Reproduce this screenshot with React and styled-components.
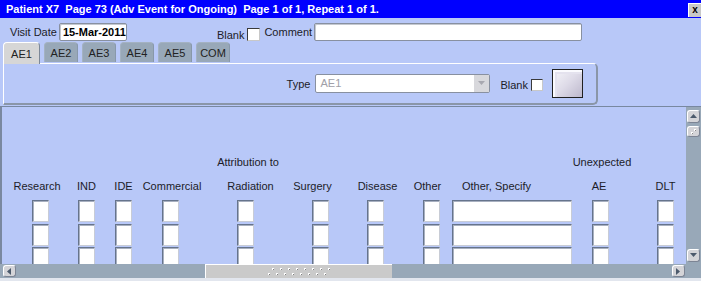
import React from 'react';
import styled, { createGlobalStyle } from 'styled-components';

// ---- styles ----
const GlobalStyle = createGlobalStyle`
  body {
    margin: 0;
    background: #b8c8f8;
    font-family: 'Liberation Sans', Arial, sans-serif;
  }
  * { box-sizing: border-box; }
`;

const Window = styled.div`
  width: 701px;
  height: 281px;
  display: flex;
  flex-direction: column;
  background: #b8c8f8;
  overflow: hidden;
  font-size: 11px;
  color: #1c1c28;
`;

const TitleBar = styled.div`
  height: 18px;
  flex: none;
  display: flex;
  align-items: flex-start;
  padding-left: 6px;
  background: #0000ff;
`;

const Title = styled.div`
  flex: 1;
  color: #fff;
  font-weight: bold;
  font-size: 11px;
  line-height: 18px;
  white-space: pre;
`;

const CloseButton = styled.div`
  margin-top: 3px;
  width: 13px;
  height: 14px;
  background: #c8c8c8;
  border-top: 1px solid #fff;
  border-left: 1px solid #fff;
  color: #000;
  font-weight: bold;
  font-size: 10px;
  line-height: 11px;
  text-align: center;
`;

const TopRow = styled.div`
  height: 24px;
  flex: none;
  display: flex;
  align-items: center;
  padding: 5px 0 1px 10px;
`;

const Label = styled.span`
  line-height: 14px;
  white-space: nowrap;
  margin-left: ${p => p.$ml || 0}px;
`;

const TextInput = styled.div`
  width: ${p => p.$w}px;
  height: 18px;
  margin-left: ${p => p.$ml || 0}px;
  padding-left: 3px;
  background: #fff;
  border: 1px solid #8890a0;
  border-radius: 2px;
  box-shadow: inset 1px 1px 0 #c4c8d0;
  color: #000;
  font-weight: bold;
  line-height: 16px;
  white-space: nowrap;
`;

const BlankGroup = styled.div`
  display: flex;
  align-items: center;
  margin-left: ${p => p.$ml || 0}px;
  margin-top: ${p => p.$mt || 0}px;
`;

const CheckBox = styled.div`
  width: ${p => p.$size || 13}px;
  height: ${p => p.$size || 13}px;
  margin-left: 3px;
  background: #fff;
  border-style: solid;
  border-width: 1px;
  border-color: #3a3a3a #c8c8c8 #c8c8c8 #3a3a3a;
`;

const TabStrip = styled.div`
  height: 21px;
  flex: none;
  display: flex;
  align-items: flex-end;
  gap: 4px;
  padding-left: 3px;
  position: relative;
  z-index: 1;
`;

const Tab = styled.div`
  width: ${p => (p.$active ? 37 : 34)}px;
  height: ${p => (p.$active ? 22 : 20)}px;
  margin-bottom: ${p => (p.$active ? -1 : 1)}px;
  display: flex;
  align-items: center;
  justify-content: center;
  background: ${p => (p.$active ? '#d6d6d6' : '#98a8b8')};
  border-radius: 4px 4px 0 0;
  border-top: 1px solid ${p => (p.$active ? '#fff' : '#a4b2c2')};
  border-left: 1px solid ${p => (p.$active ? '#fff' : '#a4b2c2')};
  border-right: 1px solid ${p => (p.$active ? '#7c8898' : '#8898aa')};
  color: #222;
  font-size: 11px;
  padding-top: 1px;
`;

const TabPanel = styled.div`
  width: 595px;
  height: 42px;
  flex: none;
  margin-left: 3px;
  display: flex;
  align-items: center;
  justify-content: flex-end;
  padding-right: 13px;
  border-top: 1px solid #fff;
  border-left: 1px solid #fff;
  border-right: 2px solid #8a96a8;
  border-bottom: 2px solid #8a96a8;
  border-radius: 0 5px 5px 0;
`;

const Select = styled.div`
  width: 175px;
  height: 19px;
  margin-left: 5px;
  display: flex;
  background: #fff;
  border: 1px solid #8890a0;
  border-radius: 2px;
  color: #a0a0a8;
`;

const SelectValue = styled.div`
  flex: 1;
  padding-left: 4px;
  line-height: 17px;
`;

const SelectArrow = styled.div`
  width: 15px;
  display: flex;
  align-items: center;
  justify-content: center;
  background: #d8d8dc;
`;

const Swatch = styled.div`
  width: 31px;
  height: 29px;
  margin-left: 9px;
  border: 1px solid #202020;
  background: linear-gradient(135deg, #f6f6fa 0%, #dedbe8 50%, #bdb8cc 100%);
  box-shadow: inset 2px 2px 0 #fafafe, inset 4px 4px 0 #e4e2ee;
`;

const Block = styled.div`
  flex: 1;
  display: flex;
  flex-direction: column;
  margin-top: 1px;
  border-top: 1px solid #7888a0;
`;

const Body = styled.div`
  height: 157px;
  flex: none;
  display: flex;
`;

const Canvas = styled.div`
  flex: 1;
  display: flex;
  align-items: flex-start;
  padding-top: 48px;
  overflow: hidden;
  border-left: 2px solid #7a88a0;
`;

const Column = styled.div`
  flex: none;
  display: flex;
  flex-direction: column;
  align-items: center;
  width: ${p => p.$w}px;
  margin-left: ${p => p.$offset}px;
`;

const ColumnLabel = styled.div`
  height: 14px;
  line-height: 14px;
  white-space: nowrap;
  margin-top: ${p => p.$mt || 0}px;
  transform: translateX(${p => p.$dx || 0}px);
`;

const Cell = styled.div`
  width: 100%;
  height: 22px;
  flex: none;
  margin-top: ${p => (p.$first ? 7 : 1.5)}px;
  background: #fff;
  border-style: solid;
  border-width: 1px;
  border-color: #66748c #c8ccd6 #c8ccd6 #66748c;
  box-shadow: inset 1px 1px 0 #a8b0c0;
`;

const VScroll = styled.div`
  width: 15px;
  flex: none;
  display: flex;
  flex-direction: column;
  align-items: center;
  padding: 3px 0 2px;
  background: #98a8b8;
`;

const ScrollButton = styled.div`
  width: 13px;
  height: ${p => p.$h || 13}px;
  flex: none;
  display: flex;
  align-items: center;
  justify-content: center;
  margin-top: ${p => p.$mt || 0};
  margin-left: ${p => p.$ml || 0};
  background: #d4d4d8;
  border-radius: 3px;
  border-top: 1px solid #fff;
  border-left: 1px solid #fff;
  border-right: 1px solid #7c8494;
  border-bottom: 1px solid #7c8494;
`;

const HScroll = styled.div`
  height: 14px;
  flex: none;
  display: flex;
  align-items: center;
  background: #98a8b8;
  padding-right: 16px;
`;

const Thumb = styled.div`
  width: 187px;
  height: 14px;
  margin-left: 189px;
  display: flex;
  align-items: center;
  justify-content: center;
  background: #cacaca;
  border-top: 1px solid #fff;
  border-left: 1px solid #fff;
`;

const BottomStrip = styled.div`
  height: 3px;
  flex: none;
  background: #e2e6ee;
`;

// ---- icons ----
const Arrow = ({ dir, color = '#4c5a6c' }) => {
  const pts = {
    up: '1,6 4.5,2 8,6',
    down: '1,2 4.5,6 8,2',
    left: '6,1 2,4.5 6,8',
    right: '2,1 6,4.5 2,8',
  }[dir];
  return (
    <svg width="9" height="9" viewBox="0 0 9 9">
      <polygon points={pts} fill={color} />
    </svg>
  );
};

const Grip = () => (
  <svg width="62" height="9" viewBox="0 0 62 9">
    {Array.from({ length: 8 }).map((_, i) => (
      <g key={i}>
        <rect x={4 + i * 8} y="1" width="2" height="2" fill="#fff" />
        <rect x={5 + i * 8} y="2" width="1" height="1" fill="#808080" />
        <rect x={i * 8} y="6" width="2" height="2" fill="#fff" />
        <rect x={1 + i * 8} y="7" width="1" height="1" fill="#808080" />
      </g>
    ))}
  </svg>
);

const MiniGrip = () => (
  <svg width="7" height="7" viewBox="0 0 7 7">
    <rect x="4" y="1" width="2" height="2" fill="#fff" />
    <rect x="1" y="4" width="2" height="2" fill="#fff" />
    <rect x="5" y="2" width="1" height="1" fill="#8a8a8a" />
    <rect x="2" y="5" width="1" height="1" fill="#8a8a8a" />
  </svg>
);

// ---- data ----
const columns = [
  { label: 'Research', x: 32, w: 17, dx: -3.5 },
  { label: 'IND', x: 78, w: 17, dx: 0 },
  { label: 'IDE', x: 115, w: 17, dx: 0 },
  { label: 'Commercial', x: 162, w: 17, dx: 1.5 },
  { label: 'Radiation', x: 237, w: 17, dx: 5, group: 'Attribution to', gdx: 2.5 },
  { label: 'Surgery', x: 312, w: 17, dx: -8 },
  { label: 'Disease', x: 367, w: 17, dx: 2 },
  { label: 'Other', x: 423, w: 17, dx: -4 },
  { label: 'Other, Specify', x: 452, w: 120, dx: -15.5 },
  { label: 'AE', x: 592, w: 17, dx: -1.5, group: 'Unexpected', gdx: 1.5 },
  { label: 'DLT', x: 657, w: 17, dx: 0 },
];

const tabs = ['AE1', 'AE2', 'AE3', 'AE4', 'AE5', 'COM'];

// ---- component ----
const App = () => {
  let prevRight = 2;
  return (
    <>
      <GlobalStyle />
      <Window>
        <TitleBar>
          <Title>Patient X7  Page 73 (Adv Event for Ongoing)  Page 1 of 1, Repeat 1 of 1.</Title>
          <CloseButton>x</CloseButton>
        </TitleBar>

        <TopRow>
          <Label>Visit Date</Label>
          <TextInput $w={68} $ml={2}>15-Mar-2011</TextInput>
          <BlankGroup $ml={90} $mt={5}>
            <Label>Blank</Label>
            <CheckBox />
          </BlankGroup>
          <Label $ml={4}>Comment</Label>
          <TextInput $w={268} $ml={2} />
        </TopRow>

        <TabStrip>
          {tabs.map((t, i) => (
            <Tab key={t} $active={i === 0}>{t}</Tab>
          ))}
        </TabStrip>

        <TabPanel>
          <Label>Type</Label>
          <Select>
            <SelectValue>AE1</SelectValue>
            <SelectArrow>
              <Arrow dir="down" color="#a8a8b0" />
            </SelectArrow>
          </Select>
          <BlankGroup $ml={10} $mt={2}>
            <Label>Blank</Label>
            <CheckBox $size={12} />
          </BlankGroup>
          <Swatch />
        </TabPanel>

        <Block>
          <Body>
            <Canvas>
              {columns.map(c => {
                const offset = c.x - prevRight;
                prevRight = c.x + c.w;
                return (
                  <Column key={c.label} $w={c.w} $offset={offset}>
                    <ColumnLabel $dx={c.gdx}>{c.group || ''}</ColumnLabel>
                    <ColumnLabel $mt={10} $dx={c.dx}>{c.label}</ColumnLabel>
                    <Cell $first />
                    <Cell />
                    <Cell />
                  </Column>
                );
              })}
            </Canvas>
            <VScroll>
              <ScrollButton><Arrow dir="up" /></ScrollButton>
              <ScrollButton $h={11} $mt="3px"><MiniGrip /></ScrollButton>
              <ScrollButton $mt="auto"><Arrow dir="down" /></ScrollButton>
            </VScroll>
          </Body>

          <HScroll>
            <ScrollButton $h={12} $ml="3px"><Arrow dir="left" /></ScrollButton>
            <Thumb><Grip /></Thumb>
            <ScrollButton $h={12} $ml="auto"><Arrow dir="right" /></ScrollButton>
          </HScroll>
          <BottomStrip />
        </Block>
      </Window>
    </>
  );
};

export default App;
